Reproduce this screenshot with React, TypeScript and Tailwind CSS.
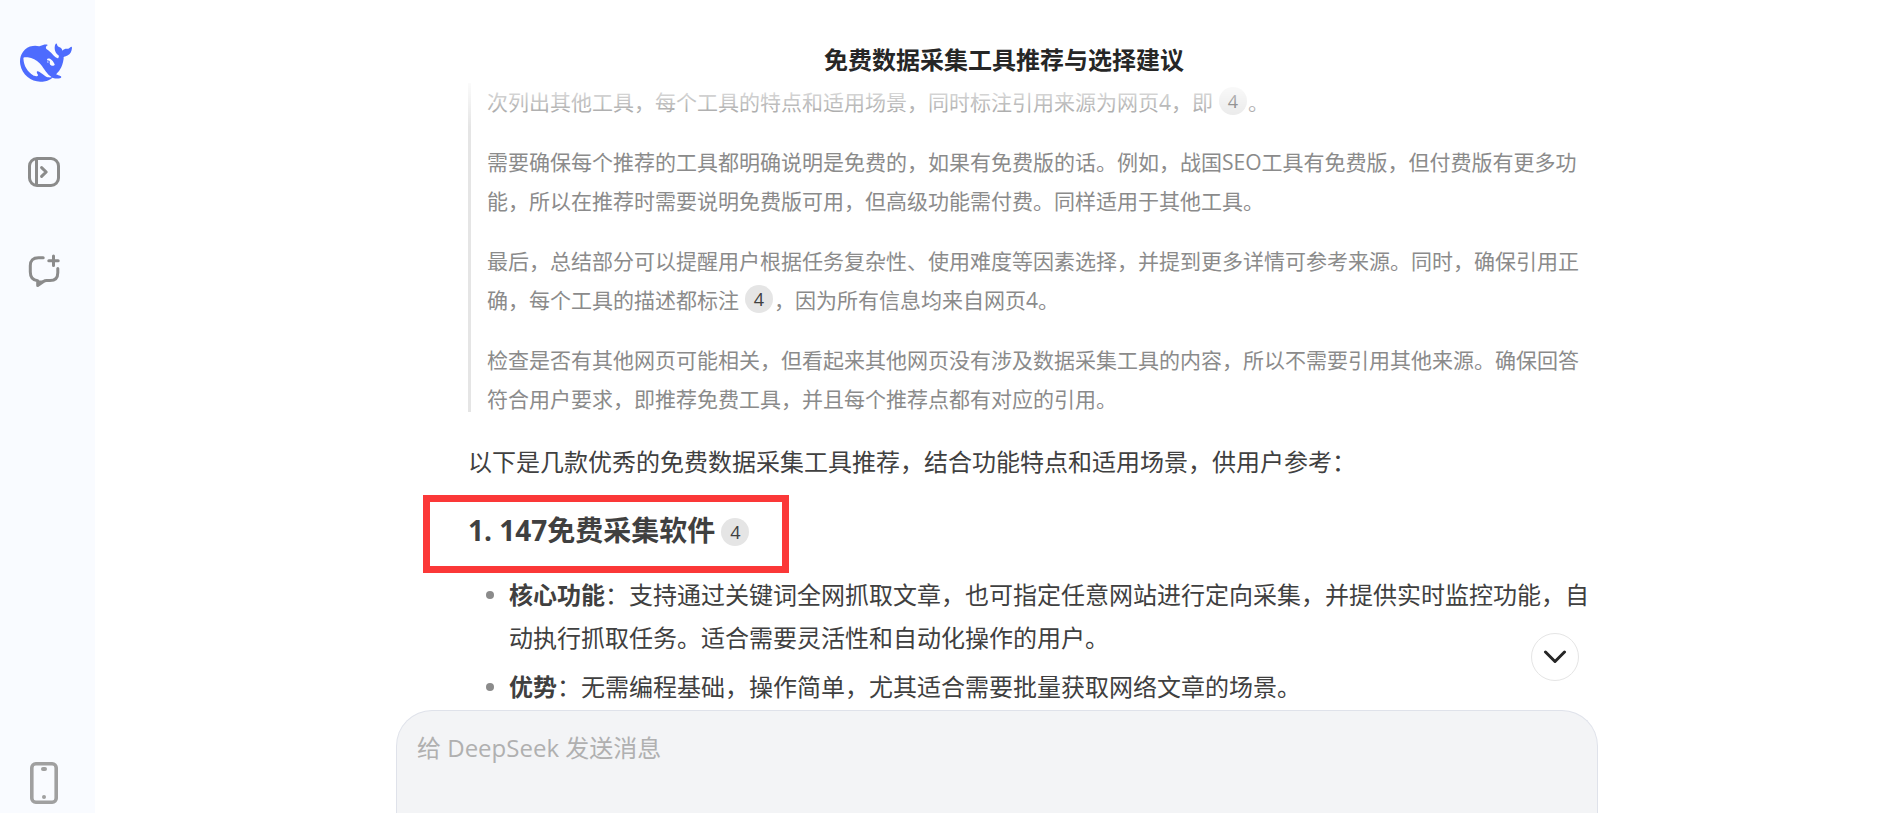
import type React from "react";

export default function App(): React.ReactElement {
  return (
    <div className="flex h-screen overflow-hidden bg-white font-['Open_Sans','Noto_Sans_CJK_SC',sans-serif]">
      <Sidebar />
      <main className="flex min-w-0 flex-1 flex-col pl-[15px]">
        <header className="flex h-[83px] shrink-0 justify-center pt-12 pl-3.5">
          <h1 className="text-[24px] leading-6 font-bold text-[#262626]">免费数据采集工具推荐与选择建议</h1>
        </header>

        <div className="relative mx-auto w-full max-w-[1202px] flex-1 overflow-hidden pl-[72px]">
          <Thinking />
          <Answer />
          {/* fades scrolled text out under the header */}
          <div className="pointer-events-none absolute inset-x-0 top-0 h-11 bg-linear-to-b from-white/85 to-white/0" />
          <button
            aria-label="滚动到底部"
            className="absolute right-[19px] bottom-[29px] flex size-12 items-center justify-center rounded-full border border-[#e5e5e5] bg-white"
          >
            <svg width="24" height="14" viewBox="0 0 24 14" fill="none" stroke="#262626" strokeWidth="3" strokeLinecap="round" strokeLinejoin="round">
              <path d="M2.5 2 12 11.5 21.5 2" />
            </svg>
          </button>
        </div>

        <form className="mx-auto w-full max-w-[1202px] shrink-0">
          <div className="h-[103px] rounded-t-[36px] border border-b-0 border-[#dfe2ea] bg-[#f3f4f6] px-5 pt-[19px]">
            <textarea
              aria-label="发送消息"
              placeholder="给 DeepSeek 发送消息"
              className="block h-20 w-full resize-none bg-transparent text-[24px] leading-9 text-[#404040] outline-none placeholder:text-[#b0b0b0]"
            />
          </div>
        </form>
      </main>
    </div>
  );
}

function Sidebar() {
  return (
    <nav className="flex w-[95px] shrink-0 flex-col items-center bg-[#f9fbff] pt-[37px] pr-[7px] pb-2 text-[#8b8b8b]">
      <a href="#" aria-label="DeepSeek" className="ml-1">
        <svg width="52" height="52" viewBox="0 0 24 24" fill="#4d6bfe">
          <path d="M23.748 4.482c-.254-.124-.364.113-.512.234-.051.039-.094.09-.137.136-.372.397-.806.657-1.373.626-.829-.046-1.537.214-2.163.848-.133-.782-.575-1.248-1.247-1.548-.352-.156-.708-.311-.955-.65-.172-.241-.219-.51-.305-.774-.055-.16-.11-.323-.293-.35-.2-.031-.278.136-.356.276-.313.572-.434 1.202-.422 1.84.027 1.436.633 2.58 1.838 3.393.137.093.172.187.129.323-.082.28-.18.552-.266.833-.055.179-.137.217-.329.14a5.526 5.526 0 01-1.736-1.18c-.857-.828-1.631-1.742-2.597-2.458a11.365 11.365 0 00-.689-.471c-.985-.957.13-1.743.388-1.836.27-.098.093-.432-.779-.428-.872.004-1.67.295-2.687.684a3.055 3.055 0 01-.465.137 9.597 9.597 0 00-2.883-.102c-1.885.21-3.39 1.102-4.497 2.623C.082 8.606-.231 10.684.152 12.85c.403 2.284 1.569 4.175 3.36 5.653 1.858 1.533 3.997 2.284 6.438 2.14 1.482-.085 3.133-.284 4.994-1.86.47.234.962.327 1.78.397.63.059 1.236-.03 1.705-.128.735-.156.684-.837.419-.961-2.155-1.004-1.682-.595-2.113-.926 1.096-1.296 2.746-2.642 3.392-7.003.05-.347.007-.565 0-.845-.004-.17.035-.237.23-.256a4.173 4.173 0 001.545-.475c1.396-.763 1.96-2.015 2.093-3.517.02-.23-.004-.467-.247-.588zM11.581 18c-2.089-1.642-3.102-2.183-3.52-2.16-.392.024-.321.471-.235.763.09.288.207.486.371.739.114.167.192.416-.113.603-.673.416-1.842-.14-1.897-.167-1.361-.802-2.5-1.86-3.301-3.307-.774-1.393-1.224-2.887-1.298-4.482-.02-.386.093-.522.477-.592a4.696 4.696 0 011.529-.039c2.132.312 3.946 1.265 5.468 2.774.868.86 1.525 1.887 2.202 2.891.72 1.066 1.494 2.082 2.48 2.914.348.292.625.514.891.677-.802.09-2.14.11-3.054-.614zm1-6.44a.306.306 0 01.415-.287.302.302 0 01.2.288.306.306 0 01-.31.307.303.303 0 01-.304-.308zm3.11 1.596c-.2.081-.399.151-.59.16a1.245 1.245 0 01-.798-.254c-.274-.23-.47-.358-.552-.758a1.73 1.73 0 01.016-.588c.07-.327-.008-.537-.239-.727-.187-.156-.426-.199-.688-.199a.559.559 0 01-.254-.078c-.11-.114-.142-.296-.078-.428.027-.054.16-.186.192-.21.356-.202.767-.136 1.146.016.352.144.618.408 1.001.782.391.451.462.576.685.914.176.265.336.537.445.848.067.195-.019.354-.25.452z" />
        </svg>
      </a>
      <button aria-label="打开边栏" className="mt-[67px]">
        <svg width="32" height="32" viewBox="0 0 32 32" fill="none" stroke="currentColor" strokeWidth="3" strokeLinecap="round" strokeLinejoin="round">
          <rect x="1.5" y="2.5" width="29" height="27" rx="7.5" />
          <path d="M8.5 2.5v27" strokeLinecap="butt" />
          <path d="m13.6 11.6 4.6 4.4-4.6 4.4" />
        </svg>
      </button>
      <button aria-label="开启新对话" className="mt-[66px]">
        <svg width="32" height="34" viewBox="0 0 32 34" fill="none" stroke="currentColor" strokeWidth="3" strokeLinecap="round" strokeLinejoin="round">
          <path d="M15.2 3.7H10.500C5 3.700 2.300 6.500 2.300 11.700v6.300c0 5 2.500 8.300 7.400 8.700v4.800l5.800-4q1.300-.900 3-.900h3.500c5.200 0 7.800-3 7.800-7.800v-4.200" />
          <path d="M9.700 31.500v-4.900h5.500Z" fill="currentColor" stroke="none" />
          <path d="M25.500 2v9.400M20.800 6.700h9.400" />
        </svg>
      </button>
      <button aria-label="下载手机应用" className="mt-auto">
        <svg width="28" height="44" viewBox="0 0 28 44" fill="none" stroke="#a0a0a0" strokeWidth="3.6">
          <rect x="1.8" y="2.8" width="24.4" height="38.4" rx="4" />
          <rect x="11" y="6" width="6" height="4" rx="2" fill="#a0a0a0" stroke="none" />
          <circle cx="14" cy="36" r="2" fill="#a0a0a0" stroke="none" />
        </svg>
      </button>
    </nav>
  );
}

function Cite({ n }: { n: number }) {
  return (
    <a
      href="#"
      className="mr-px ml-1.5 inline-flex size-7 items-center justify-center rounded-full bg-[#e5e5e5] align-[2px] text-[18px] leading-7 font-normal text-[#404040]"
    >
      {n}
    </a>
  );
}

function Thinking() {
  return (
    <section className="flex gap-4">
      <div className="mb-[7px] w-[3px] shrink-0 bg-[#e5e5e5]" />
      <div className="flex flex-col gap-[21px] text-[21px] leading-[39px] text-[#8b8b8b]">
        <p>
          次列出其他工具，每个工具的特点和适用场景，同时标注引用来源为网页4，即
          <Cite n={4} />。
        </p>
        <p>
          需要确保每个推荐的工具都明确说明是免费的，如果有免费版的话。例如，战国SEO工具有免费版，但付费版有更多功能，所以在推荐时需要说明免费版可用，但高级功能需付费。同样适用于其他工具。
        </p>
        <p>
          最后，总结部分可以提醒用户根据任务复杂性、使用难度等因素选择，并提到更多详情可参考来源。同时，确保引用正确，每个工具的描述都标注
          <Cite n={4} />
          ，因为所有信息均来自网页4。
        </p>
        <p>
          检查是否有其他网页可能相关，但看起来其他网页没有涉及数据采集工具的内容，所以不需要引用其他来源。确保回答符合用户要求，即推荐免费工具，并且每个推荐点都有对应的引用。
        </p>
      </div>
    </section>
  );
}

const POINTS = [
  {
    label: "核心功能",
    text: "：支持通过关键词全网抓取文章，也可指定任意网站进行定向采集，并提供实时监控功能，自动执行抓取任务。适合需要灵活性和自动化操作的用户。",
  },
  { label: "优势", text: "：无需编程基础，操作简单，尤其适合需要批量获取网络文章的场景。" },
];

function Answer() {
  return (
    <section className="mt-[21px] text-[24px] leading-[43px] text-[#404040]">
      <p>以下是几款优秀的免费数据采集工具推荐，结合功能特点和适用场景，供用户参考：</p>
      {/* the frame hangs out to the left so the heading stays on the text column */}
      <h3 className="mt-3 -ml-[45px] flex h-[78px] w-fit items-center border-[7px] border-[#fb3838] pr-8 pb-2 pl-[38px] text-[28px] leading-10 font-bold">
        <span>
          1. 147免费采集软件
          <Cite n={4} />
        </span>
      </h3>
      <ul className="flex flex-col gap-1.5">
        {POINTS.map((p) => (
          <li key={p.label} className="flex gap-[15px] pl-[18px]">
            <span className="mt-[18px] size-2 shrink-0 rounded-full bg-[#8b8b8b]" />
            <p>
              <strong>{p.label}</strong>
              {p.text}
            </p>
          </li>
        ))}
      </ul>
    </section>
  );
}
